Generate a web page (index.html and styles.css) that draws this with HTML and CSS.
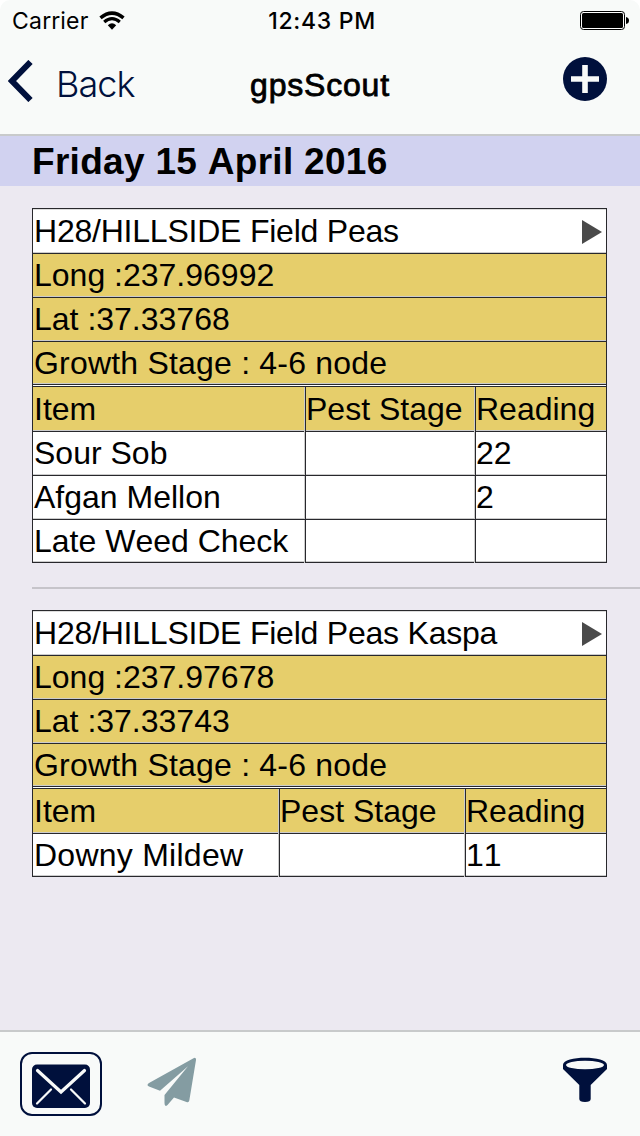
FILE: index.html
```html
<!DOCTYPE html>
<html lang="en">
<head>
  <meta charset="UTF-8">
  <meta name="viewport" content="width=device-width, initial-scale=1.0">
  <title>gpsScout</title>
  <link rel="stylesheet" href="styles.css">
</head>
<body>
  <header>
    <div class="status">
      <div class="carrier">
        <span class="carrier-name">Carrier</span>
        <svg width="26" height="20" viewBox="0 0 26 20" fill="none" stroke="#000">
          <path d="M1.500 6.800Q13 -2.600 24.500 6.800" stroke-width="3.600"/>
          <path d="M5.200 11Q13 4.400 20.800 11" stroke-width="3.200"/>
          <path d="M8.800 14.200Q13 10.300 17.200 14.200L13 18.800Z" fill="#000" stroke="none"/>
        </svg>
      </div>
      <div class="time">12:43 PM</div>
      <div class="battery">
        <svg width="49" height="19" viewBox="0 0 49 19">
          <rect x="0.5" y="0.5" width="44" height="18" rx="3" fill="#fff" stroke="#000"/>
          <rect x="2" y="2" width="41" height="15" rx="1.5"/>
          <path d="M46 6Q49 6.500 49 9.500T46 13Z"/>
        </svg>
      </div>
    </div>
    <nav>
      <a class="back">
        <svg width="26" height="42" viewBox="0 0 26 42" fill="none" stroke="#00103c" stroke-width="6">
          <path d="M22.500 2L4 21L22.500 40"/>
        </svg>
        <span class="back-label">Back</span>
      </a>
      <h1>gpsScout</h1>
      <a class="add">
        <svg width="44" height="44" viewBox="0 0 44 44">
          <circle cx="22" cy="22" r="22" fill="#00103c"/>
          <path d="M8 22H36M22 8V36" stroke="#f8faf9" stroke-width="5.600"/>
        </svg>
      </a>
    </nav>
  </header>

  <h2><span>Friday 15 April 2016</span></h2>

  <main>
    <!-- Record 1 -->
    <section class="record">
      <div class="row title"><span>H28/HILLSIDE Field Peas</span><i class="arrow"></i></div>
      <div class="row info"><span>Long :237.96992</span></div>
      <div class="row info"><span>Lat :37.33768</span></div>
      <div class="row info stage"><span>Growth Stage : 4-6 node</span></div>
      <div class="items">
        <div class="row head"><span>Item</span><span>Pest Stage</span><span>Reading</span></div>
        <div class="row"><span>Sour Sob</span><span></span><span>22</span></div>
        <div class="row"><span>Afgan Mellon</span><span></span><span>2</span></div>
        <div class="row"><span>Late Weed Check</span><span></span><span></span></div>
      </div>
    </section>
    <hr>
    <!-- Record 2 -->
    <section class="record narrow">
      <div class="row title"><span>H28/HILLSIDE Field Peas Kaspa</span><i class="arrow"></i></div>
      <div class="row info"><span>Long :237.97678</span></div>
      <div class="row info"><span>Lat :37.33743</span></div>
      <div class="row info stage"><span>Growth Stage : 4-6 node</span></div>
      <div class="items">
        <div class="row head"><span>Item</span><span>Pest Stage</span><span>Reading</span></div>
        <div class="row"><span class="wide">Downy Mildew</span><span></span><span>11</span></div>
      </div>
    </section>
  </main>

  <footer>
    <a class="mail">
      <svg width="58" height="44" viewBox="0 0 58 44" fill="none" stroke="#f8faf9" stroke-linecap="round">
        <rect y="0.500" width="58" height="43.500" rx="5" fill="#00103c" stroke="none"/>
        <path d="M5.500 6.500L29 28L52.500 6.500" stroke-width="3.200"/>
        <path d="M19 25.500L5 39.500M39 25.500L53 39.500" stroke-width="2.200"/>
      </svg>
    </a>
    <a class="send">
      <svg width="50" height="50" viewBox="0 0 50 50" fill="#849ca2">
        <path d="M46.500 1.200Q49.200 0 49 3L42.300 43.500Q41.800 46 39.500 45L27 40.500L20.500 48Q17.500 50.500 17.500 46V38L41 9.300L13 33.800L2 29.500Q-1 28 2 26Z"/>
      </svg>
    </a>
    <a class="filter">
      <svg width="46" height="46" viewBox="0 0 46 46">
        <path d="M1 8C1 -1.700 45 -1.700 45 8V12L28.700 28V42Q28.700 45 23 45T17.300 42V28L1 12Z" fill="#00103c"/>
        <ellipse cx="23" cy="8" rx="19" ry="4.300" fill="#f8faf9"/>
      </svg>
    </a>
  </footer>
</body>
</html>
```

FILE: styles.css
```css
* {
  box-sizing: border-box;
}
body {
  margin: 0;
  height: 1136px;
  display: flex;
  flex-direction: column;
  font-family: "Liberation Sans", Arial, sans-serif;
  font-size: 32px;
  font-kerning: none;
  color: #000;
  background: #fff;
  overflow: hidden;
}
header {
  height: 136px;
  background: #f8faf9;
  border-bottom: 2px solid #c8cacb;
  border-radius: 10px 10px 0 0;
}
.status {
  height: 40px;
  display: grid;
  grid-template-columns: 1fr auto 1fr;
  align-items: center;
  padding: 1px 11px 0 12px;
  font-family: Inter, sans-serif;
  font-size: 23px;
}
.carrier {
  display: flex;
  align-items: center;
  gap: 10px;
}
.carrier-name {
  letter-spacing: 0.3px;
}
.time {
  padding-left: 3px;
  font-weight: 500;
  letter-spacing: 0.7px;
}
.battery {
  display: flex;
  justify-content: flex-end;
}
nav {
  height: 88px;
  display: grid;
  grid-template-columns: 1fr auto 1fr;
  align-items: center;
  padding: 0 33px 0 8px;
}
.back {
  display: flex;
  align-items: center;
  gap: 22px;
  padding-bottom: 6px;
  color: #00103c;
}
.back-label {
  font-family: Inter, sans-serif;
  font-size: 36px;
  font-weight: 300;
  letter-spacing: -0.9px;
  line-height: 42px;
  padding-top: 5px;
}
h1 {
  margin: 0;
  padding: 3px 0 0 25px;
  font-size: 32px;
  font-weight: normal;
  letter-spacing: 0.8px;
  -webkit-text-stroke: 0.8px #000;
}
.add {
  display: flex;
  justify-content: flex-end;
  padding-bottom: 10px;
}
h2 {
  margin: 0;
  height: 50px;
  padding-left: 32px;
  line-height: 51px;
  font-size: 37px;
  letter-spacing: 0.3px;
  background: #d1d2f0;
}
main {
  flex: 1;
  padding: 22px 0 0 32px;
  background: #ece9f1;
}
.record {
  width: 575px;
  background: #fff;
  border: 1px solid #28282c;
}
.row {
  display: flex;
  height: 44px;
  line-height: 43px;
  border-bottom: 1px solid #28282c;
  box-shadow: inset 0 -1px #ccc;
  white-space: nowrap;
}
.row > span {
  padding-left: 1px;
}
.title {
  height: 45px;
  line-height: 44px;
  justify-content: space-between;
  align-items: center;
  letter-spacing: -0.22px;
  box-shadow: inset 0 1px #ddd, inset 0 -1px #ccc;
}
.arrow {
  border-left: 20px solid #4a4a4a;
  border-top: 12px solid transparent;
  border-bottom: 12px solid transparent;
  margin: 2px 4px 0 0;
}
.info,
.head {
  background: #e6ce6b;
}
.stage {
  height: 43px;
  letter-spacing: 0.2px;
}
.items {
  margin-top: 1px;
  border-top: 1px solid #28282c;
}
.head {
  height: 45px;
  line-height: 45px;
}
.items .row {
  display: grid;
  grid-template-columns: 273px 170px 1fr;
}
.narrow .items .row {
  grid-template-columns: 247px 186px 1fr;
}
.items span + span {
  padding-left: 0;
}
.items .wide {
  letter-spacing: 0.25px;
}
.items span:not(:last-child) {
  border-right: 1px solid #28282c;
  box-shadow: inset -1px 0 #ccc;
}
.items .row:last-child {
  height: 42px;
  border-bottom: none;
}
hr {
  margin: 24px 0 21px;
  border: none;
  height: 2px;
  background: #c6c4ca;
}
footer {
  height: 106px;
  display: flex;
  align-items: flex-start;
  padding: 20px 32px 0 20px;
  background: #f8faf9;
  border-top: 2px solid #c8cacb;
}
.mail {
  width: 82px;
  height: 64px;
  display: flex;
  align-items: center;
  justify-content: center;
  padding-top: 4px;
  border: 2px solid #00103c;
  border-radius: 12px;
}
.send {
  margin: 5px 0 0 45px;
}
.filter {
  margin: 5px 0 0 auto;
}
.send svg,
.filter svg {
  display: block;
}
```
